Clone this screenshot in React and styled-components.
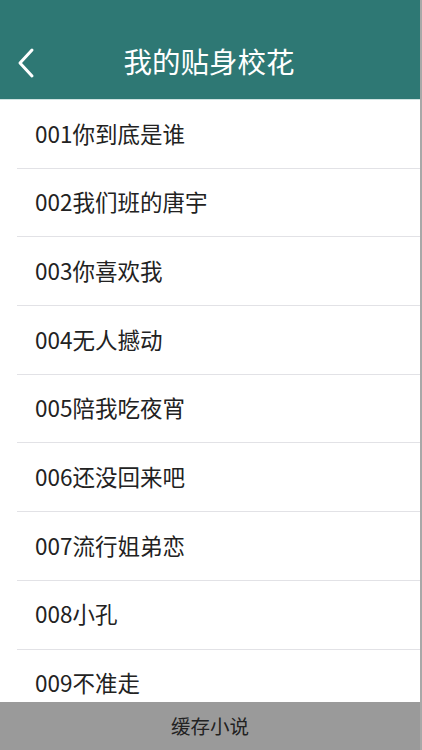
import styled, { createGlobalStyle } from "styled-components"

const chapters = [
  "001你到底是谁",
  "002我们班的唐宇",
  "003你喜欢我",
  "004无人撼动",
  "005陪我吃夜宵",
  "006还没回来吧",
  "007流行姐弟恋",
  "008小孔",
  "009不准走",
]

const GlobalStyle = createGlobalStyle`
  * { box-sizing: border-box; }
  html, body {
    margin: 0;
    padding: 0;
    height: 100%;
    overflow: hidden;
    background: #ffffff;
  }
  body {
    font-family: "Noto Sans CJK SC", "Noto Sans", sans-serif;
  }
`

const App = () => {
  return (
    <>
      <GlobalStyle />
      <Screen>
        <NavBar>
          <BackButton aria-label="返回">
            <svg width="18" height="32" viewBox="0 0 18 32" fill="none">
              <path
                d="M15 3 L3 16 L15 29"
                stroke="#ffffff"
                strokeWidth="3"
                strokeLinecap="round"
                strokeLinejoin="round"
              />
            </svg>
          </BackButton>
          <Title>我的贴身校花</Title>
        </NavBar>
        <ChapterList>
          {chapters.map((name) => (
            <ChapterRow key={name}>
              <ChapterName>{name}</ChapterName>
            </ChapterRow>
          ))}
        </ChapterList>
        <CacheBar>缓存小说</CacheBar>
      </Screen>
    </>
  )
}
export default App

const Screen = styled.div`
  width: 422px;
  height: 750px;
  display: flex;
  flex-direction: column;
  background: #ffffff;
  border-right: 2px solid #a8a8a8;
  overflow: hidden;
`

const NavBar = styled.header`
  flex: 0 0 100px;
  position: relative;
  display: flex;
  align-items: center;
  justify-content: center;
  padding-top: 24px;
  background: #2e7874;
  border-bottom: 1px solid #cfe3e1;
`

const BackButton = styled.button`
  position: absolute;
  left: 17px;
  top: 47px;
  width: 22px;
  height: 32px;
  padding: 0;
  border: none;
  background: transparent;
  display: flex;
  align-items: center;
  cursor: pointer;
`

const Title = styled.h1`
  margin: 0;
  margin-left: -2px;
  color: #ffffff;
  font-size: 28.5px;
  font-weight: 400;
  line-height: 1;
`

const ChapterList = styled.ul`
  flex: 1;
  margin: 0;
  padding: 0 0 0 17px;
  list-style: none;
  overflow: hidden;
`

const ChapterRow = styled.li`
  height: 68.7px;
  display: flex;
  align-items: center;
  border-bottom: 1.5px solid #e2e2e6;
`

const ChapterName = styled.span`
  padding-left: 18px;
  padding-bottom: 2px;
  color: #222222;
  font-size: 22.5px;
  line-height: 1;
`

const CacheBar = styled.button`
  flex: 0 0 48px;
  width: 100%;
  border: none;
  background: #9a9a9a;
  color: #222222;
  font-family: "Noto Sans CJK SC", "Noto Sans", sans-serif;
  font-size: 19.5px;
  display: flex;
  align-items: center;
  justify-content: center;
  padding: 0 0 2px;
  cursor: pointer;
`
